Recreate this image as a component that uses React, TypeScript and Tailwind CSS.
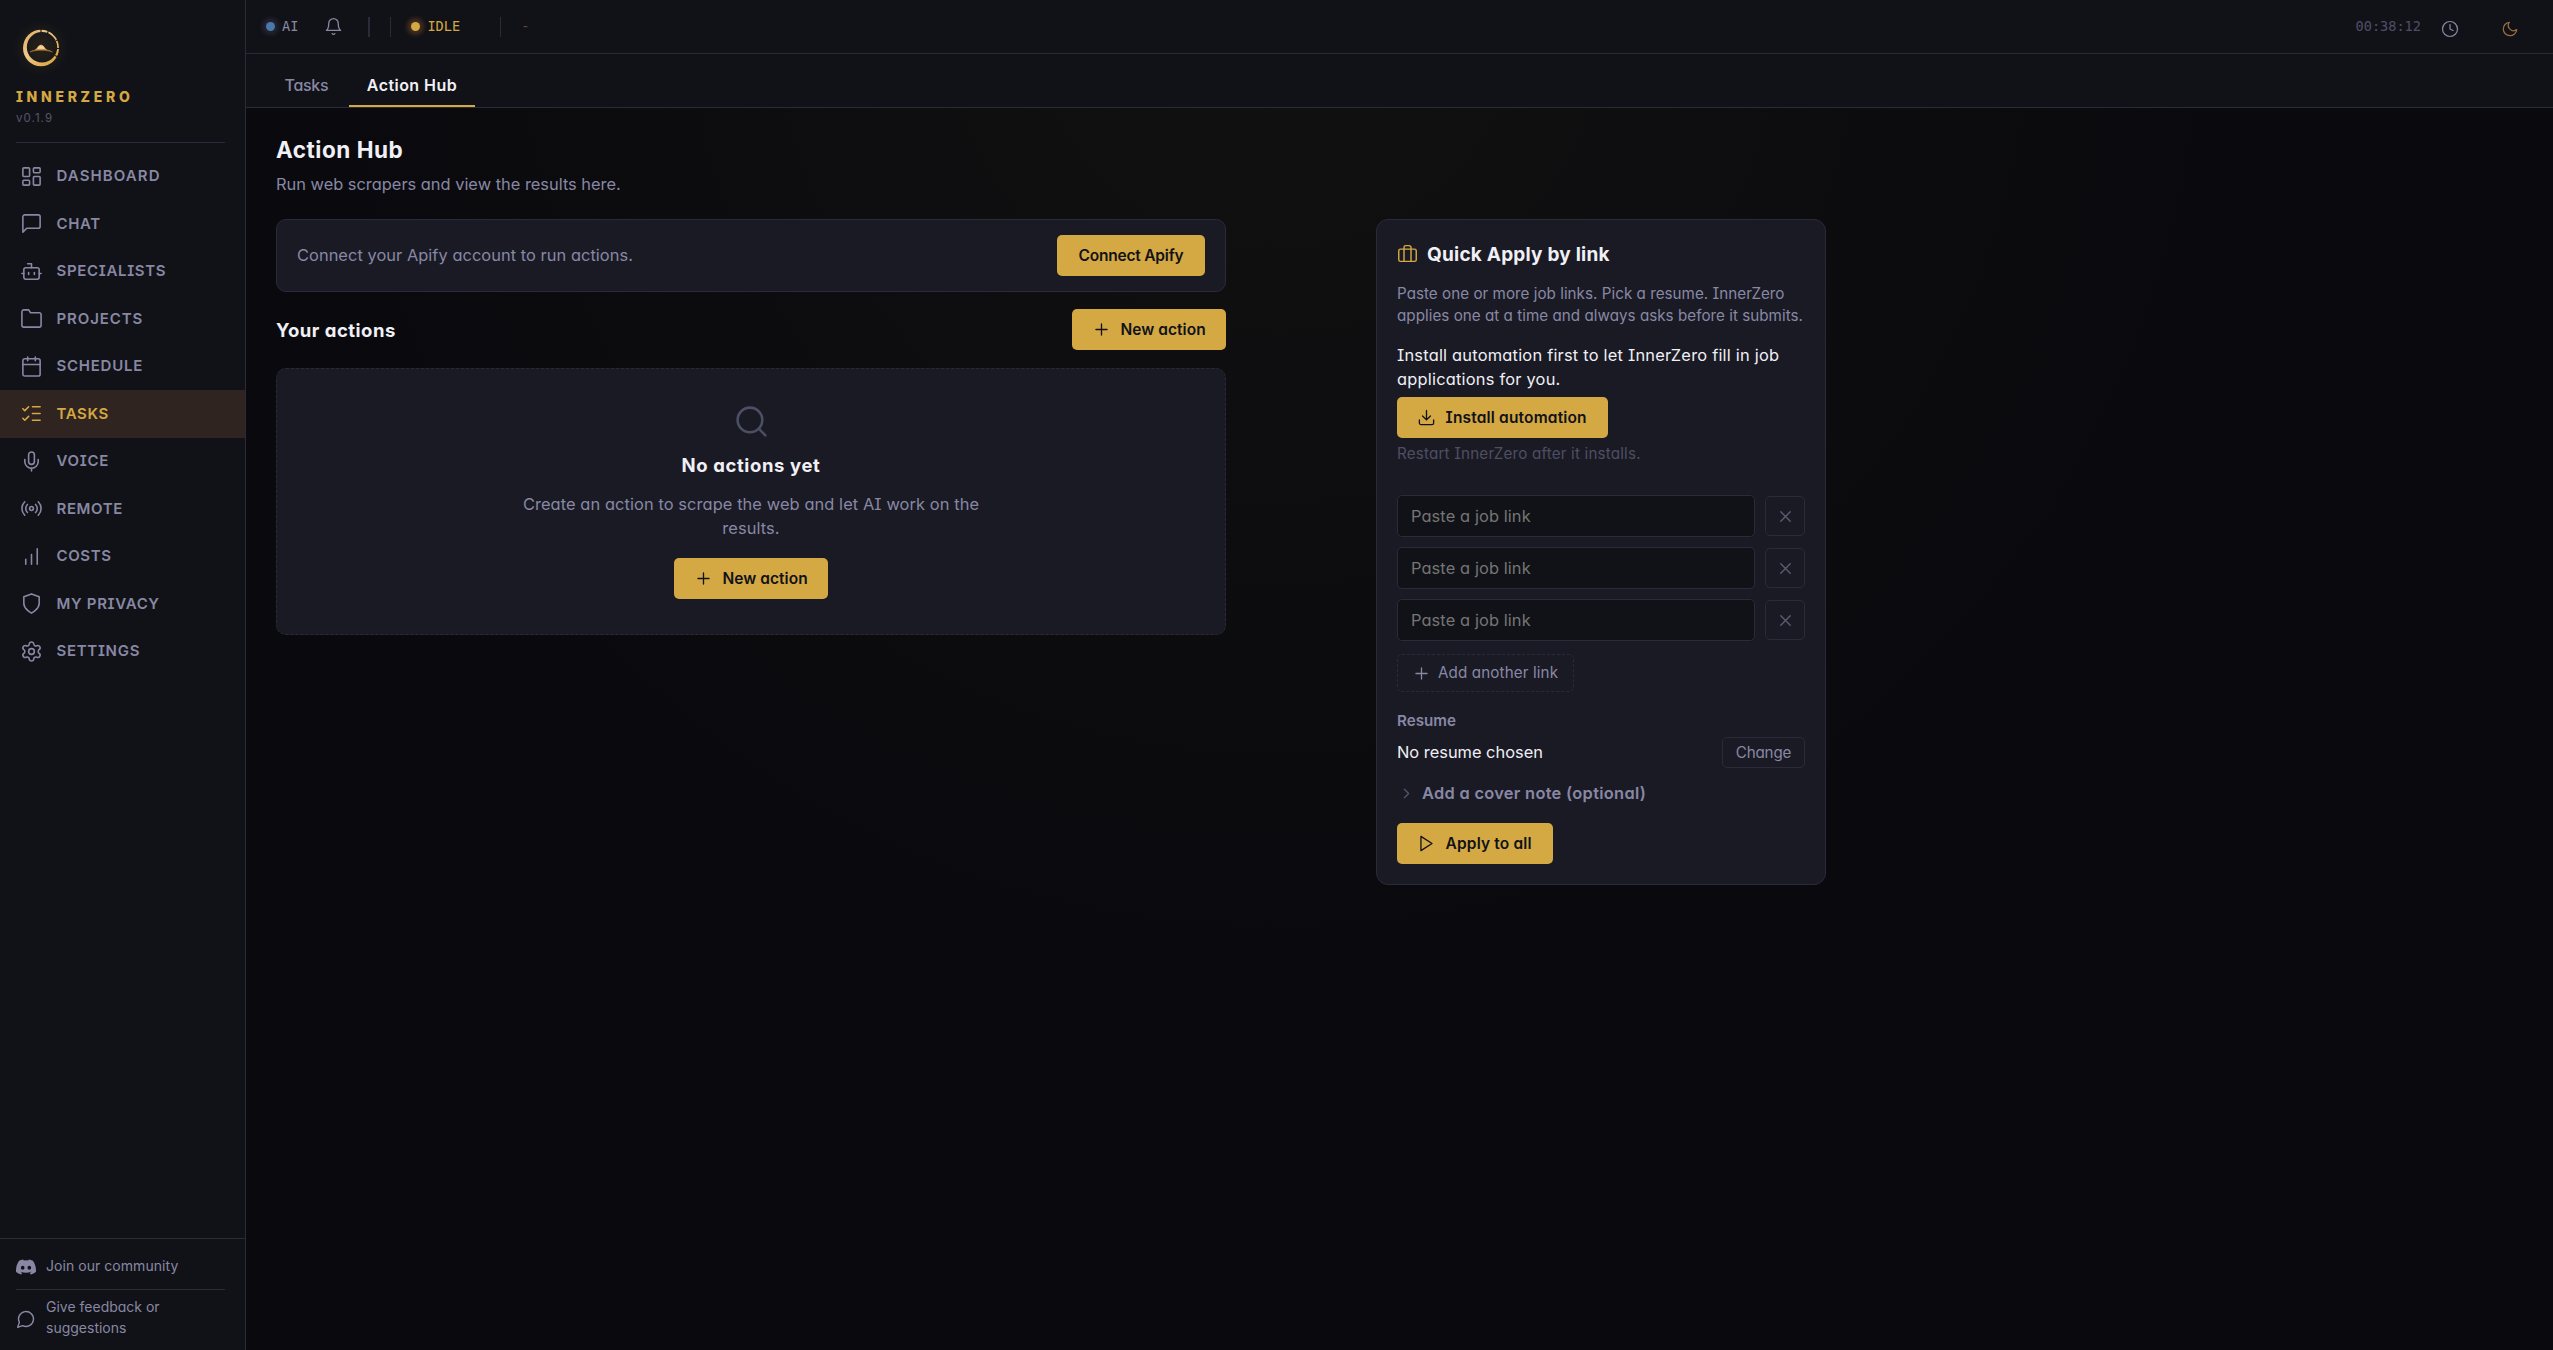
import type { ReactNode } from "react";
import { Bot, Radio, ListChecks, Mic, Settings } from "lucide-react";

type IconProps = { size?: number; sw?: number; className?: string };

function Svg({ size = 24, sw = 1.65, className = "", children }: IconProps & { children: ReactNode }) {
  return (
    <svg
      width={size}
      height={size}
      viewBox="0 0 24 24"
      fill="none"
      stroke="currentColor"
      strokeWidth={sw}
      strokeLinecap="round"
      strokeLinejoin="round"
      className={`shrink-0 ${className}`}
    >
      {children}
    </svg>
  );
}

const Dashboard = (p: IconProps) => (
  <Svg {...p}>
    <rect x="3" y="3" width="7" height="9" rx="1" />
    <rect x="14" y="3" width="7" height="5" rx="1" />
    <rect x="14" y="12" width="7" height="9" rx="1" />
    <rect x="3" y="16" width="7" height="5" rx="1" />
  </Svg>
);
const Chat = (p: IconProps) => (
  <Svg {...p}>
    <path d="M21 15a2 2 0 0 1-2 2H7l-4 4V5a2 2 0 0 1 2-2h14a2 2 0 0 1 2 2z" />
  </Svg>
);
const Folder = (p: IconProps) => (
  <Svg {...p}>
    <path d="M22 19a2 2 0 0 1-2 2H4a2 2 0 0 1-2-2V5a2 2 0 0 1 2-2h5l2 3h9a2 2 0 0 1 2 2z" />
  </Svg>
);
const Calendar = (p: IconProps) => (
  <Svg {...p}>
    <rect x="3" y="4" width="18" height="18" rx="2" />
    <path d="M16 2v4M8 2v4M3 10h18" />
  </Svg>
);
const Bars = (p: IconProps) => (
  <Svg {...p}>
    <path d="M12 20V10M18 20V4M6 20v-5" />
  </Svg>
);
const Shield = (p: IconProps) => (
  <Svg {...p}>
    <path d="M12 22s8-4 8-10V5l-8-3-8 3v7c0 6 8 10 8 10z" />
  </Svg>
);
const Bell = (p: IconProps) => (
  <Svg {...p}>
    <path d="M18 8A6 6 0 0 0 6 8c0 7-3 9-3 9h18s-3-2-3-9" />
    <path d="M13.7 21a2 2 0 0 1-3.4 0" />
  </Svg>
);
const Clock = (p: IconProps) => (
  <Svg {...p}>
    <circle cx="12" cy="12" r="10" />
    <path d="M12 6v6l4 2" />
  </Svg>
);
const Moon = (p: IconProps) => (
  <Svg {...p}>
    <path d="M21 12.8A9 9 0 1 1 11.2 3 7 7 0 0 0 21 12.8z" />
  </Svg>
);
const Search = (p: IconProps) => (
  <Svg {...p}>
    <circle cx="11" cy="11" r="8" />
    <path d="m21 21-4.35-4.35" />
  </Svg>
);
const Plus = (p: IconProps) => (
  <Svg {...p}>
    <path d="M12 5v14M5 12h14" />
  </Svg>
);
const Cross = (p: IconProps) => (
  <Svg {...p}>
    <path d="M18 6 6 18M6 6l12 12" />
  </Svg>
);
const Chevron = (p: IconProps) => (
  <Svg {...p}>
    <path d="m9 18 6-6-6-6" />
  </Svg>
);
const Download = (p: IconProps) => (
  <Svg {...p}>
    <path d="M21 15v4a2 2 0 0 1-2 2H5a2 2 0 0 1-2-2v-4M7 10l5 5 5-5M12 15V3" />
  </Svg>
);
const Play = (p: IconProps) => (
  <Svg {...p}>
    <path d="M5 3l14 9-14 9z" />
  </Svg>
);
const Briefcase = (p: IconProps) => (
  <Svg {...p}>
    <rect x="2" y="7" width="20" height="14" rx="2" />
    <path d="M16 21V5a2 2 0 0 0-2-2h-4a2 2 0 0 0-2 2v16" />
  </Svg>
);
const Bubble = (p: IconProps) => (
  <Svg {...p}>
    <path d="M7.9 20A9 9 0 1 0 4 16.1L2 22Z" />
  </Svg>
);
const Discord = () => (
  <svg width="20" height="20" viewBox="0 0 24 24" fill="currentColor" className="shrink-0">
    <path d="M20.317 4.37a19.79 19.79 0 0 0-4.885-1.515.074.074 0 0 0-.079.037c-.21.375-.444.864-.608 1.25a18.27 18.27 0 0 0-5.487 0 12.64 12.64 0 0 0-.617-1.25.077.077 0 0 0-.079-.037A19.736 19.736 0 0 0 3.677 4.37a.07.07 0 0 0-.032.027C.533 9.046-.32 13.58.099 18.057a.082.082 0 0 0 .031.057 19.9 19.9 0 0 0 5.993 3.03.078.078 0 0 0 .084-.028c.462-.63.874-1.295 1.226-1.994a.076.076 0 0 0-.041-.106 13.107 13.107 0 0 1-1.872-.892.077.077 0 0 1-.008-.128c.126-.094.252-.192.372-.292a.074.074 0 0 1 .077-.01c3.928 1.793 8.18 1.793 12.062 0a.074.074 0 0 1 .078.01c.12.098.246.198.373.292a.077.077 0 0 1-.006.127 12.3 12.3 0 0 1-1.873.892.077.077 0 0 0-.041.107c.36.698.772 1.362 1.225 1.993a.076.076 0 0 0 .084.028 19.84 19.84 0 0 0 6.002-3.03.077.077 0 0 0 .032-.054c.5-5.177-.838-9.674-3.549-13.66a.061.061 0 0 0-.031-.03zM8.02 15.33c-1.183 0-2.157-1.085-2.157-2.419 0-1.333.956-2.419 2.157-2.419 1.21 0 2.176 1.096 2.157 2.42 0 1.333-.956 2.418-2.157 2.418zm7.975 0c-1.183 0-2.157-1.085-2.157-2.419 0-1.333.955-2.419 2.157-2.419 1.21 0 2.176 1.096 2.157 2.42 0 1.333-.946 2.418-2.157 2.418z" />
  </svg>
);

function Logo() {
  return (
    <svg width="60" height="60" viewBox="0 0 60 60" className="shrink-0">
      <defs>
        <radialGradient id="halo">
          <stop offset="0" stopColor="#d4a843" stopOpacity="0.1" />
          <stop offset="0.6" stopColor="#d4a843" stopOpacity="0.05" />
          <stop offset="1" stopColor="#d4a843" stopOpacity="0" />
        </radialGradient>
        <linearGradient id="ring" x1="0" y1="0" x2="1" y2="1">
          <stop offset="0" stopColor="#dfa95e" />
          <stop offset="0.4" stopColor="#efc88c" />
          <stop offset="1" stopColor="#d4a02f" />
        </linearGradient>
      </defs>
      <circle cx="30" cy="30" r="28" fill="url(#halo)" />
      <path
        fillRule="evenodd"
        fill="url(#ring)"
        d="M12 30a18 18.3 0 1 0 36 0a18 18.3 0 1 0-36 0zM15.8 29.2a15.2 15.2 0 1 1 30.4 0a15.2 15.2 0 1 1-30.4 0z"
      />
      <g stroke="#17161a" strokeWidth="1.1">
        <path d="M30 10v5M37.5 12l-1 3.500M42.500 17l3-2.500M45 22.500l3.500-1M45.500 30.500h3.500M44 37.500l4 2" />
      </g>
      <path d="M19 34c5-3.600 17-3.600 22.500 0c-6-2.200-17-2.200-22.500 0z" fill="#b5763a" stroke="#b5763a" strokeWidth=".5" />
      <path d="M24.500 31.600c2-.6 2.500-4.600 5.500-4.600s3.500 4 5.500 4.600c-3-.6-8-.6-11 0z" fill="#f5d29a" stroke="#e6b25c" strokeWidth=".6" />
    </svg>
  );
}

const NAV: { label: string; icon: ReactNode; track: string; active?: boolean }[] = [
  { label: "DASHBOARD", icon: <Dashboard size={23} />, track: "tracking-[1.1px]" },
  { label: "CHAT", icon: <Chat size={23} />, track: "tracking-[0.6px]" },
  { label: "SPECIALISTS", icon: <Bot size={23} strokeWidth={1.65} />, track: "tracking-[0.68px]" },
  { label: "PROJECTS", icon: <Folder size={23} />, track: "tracking-[0.9px]" },
  { label: "SCHEDULE", icon: <Calendar size={23} />, track: "tracking-[0.75px]" },
  { label: "TASKS", icon: <ListChecks size={23} strokeWidth={1.65} />, track: "tracking-[0.6px]", active: true },
  { label: "VOICE", icon: <Mic size={23} strokeWidth={1.65} />, track: "tracking-[0.7px]" },
  { label: "REMOTE", icon: <Radio size={23} strokeWidth={1.65} />, track: "tracking-[0.6px]" },
  { label: "COSTS", icon: <Bars size={23} />, track: "tracking-[0.6px]" },
  { label: "MY PRIVACY", icon: <Shield size={23} />, track: "tracking-[0.66px]" },
  { label: "SETTINGS", icon: <Settings size={23} strokeWidth={1.65} />, track: "tracking-[0.7px]" },
];

function Sidebar() {
  return (
    <aside className="flex h-full w-[246px] shrink-0 flex-col border-r border-[#2a2a3a] bg-[#111217] text-[#8888a4]">
      <div className="mr-5 ml-4 flex h-[143px] shrink-0 flex-col border-b border-[#2a2a3a]">
        <div className="-ml-[5px] pt-[18px]">
          <Logo />
        </div>
        <div className="mt-[9px] text-sm leading-5 font-extrabold tracking-[3.7px] text-[#d4a843]">INNERZERO</div>
        <div className="mt-[3px] text-[11.5px] leading-4 tracking-[1.05px] text-[#55556a]">v0.1.9</div>
      </div>
      <nav className="mt-[9.500px] flex flex-1 flex-col">
        {NAV.map((n) => (
          <a
            key={n.label}
            className={`flex h-[47.500px] items-center gap-[14px] pl-[19.500px] text-[15px] font-[560] ${n.track} ${
              n.active ? "bg-[#2f241f] text-[#d4a843]" : ""
            }`}
          >
            {n.icon}
            <span>{n.label}</span>
          </a>
        ))}
      </nav>
      <div className="flex h-28 shrink-0 flex-col border-t border-[#2a2a3a] pr-5 pl-4 text-sm leading-[21px]">
        <a className="flex h-[51px] items-center gap-[10px] border-b border-[#2a2a3a] pt-[5px] tracking-[0.050px]">
          <Discord />
          <span className="pb-[3px]">Join our community</span>
        </a>
        <a className="flex items-center gap-[10px] pt-[6px]">
          <Bubble size={20} className="mt-[3px]" />
          <span>
            Give feedback or
            <br />
            suggestions
          </span>
        </a>
      </div>
    </aside>
  );
}

function Header() {
  return (
    <header className="flex h-[54px] shrink-0 items-center border-b border-[#2a2a3a] bg-[#111217] font-['DejaVu_Sans_Mono',monospace] text-[13.600px]">
      <span className="ml-5 size-[9px] rounded-full bg-[#4a78a8] shadow-[0_0_4px_4px_rgba(90,90,140,0.25)]" />
      <span className="ml-[7px] text-[#8888a4]">AI</span>
      <Bell size={19} className="ml-[26px] text-[#8888a4]" />
      <span className="ml-[25px] h-5 w-0.5 bg-[#2a2a3a]" />
      <span className="ml-5 h-5 w-px bg-[#2a2a3a]" />
      <span className="ml-5 size-[9px] rounded-full bg-[#d4a843] shadow-[0_0_4px_4px_rgba(190,110,50,0.3)]" />
      <span className="ml-[7px] text-[#d4a843]">IDLE</span>
      <span className="ml-10 h-5 w-px bg-[#2a2a3a]" />
      <span className="ml-[20px] text-[#6b4a30]">-</span>
      <span className="ml-auto text-[#4e4e68]">00:38:12</span>
      <Clock size={18} className="mt-1 ml-[20px] text-[#8888a4]" />
      <Moon size={18} className="mt-1 mr-[34px] ml-[42px] text-[#9c6b40]" />
    </header>
  );
}

function Tabs() {
  return (
    <div className="flex h-[54px] shrink-0 items-end border-b border-[#2a2a3a] bg-[#111217] pl-[19px] text-base">
      <div className="flex h-[44px] w-[84px] items-center pl-[19.500px] font-medium tracking-[-0.300px] text-[#8888a4]">Tasks</div>
      <div className="flex h-[44px] w-[126px] items-center justify-center border-b-2 border-[#d4a843] pt-0.5 font-semibold tracking-[0.450px] text-[#f0f0f6]">
        Action Hub
      </div>
    </div>
  );
}

function GoldButton({ icon, children, className }: { icon?: ReactNode; children: ReactNode; className: string }) {
  return (
    <button
      className={`flex h-[41px] shrink-0 items-center gap-[9.500px] rounded-[5px] bg-[#d4a843] pl-5 text-[15.500px] font-semibold whitespace-nowrap text-[#111217] ${className}`}
    >
      {icon}
      {children}
    </button>
  );
}

function LeftColumn() {
  return (
    <div className="flex w-[950px] flex-col">
      <div className="flex h-[73px] items-center justify-between rounded-[10px] border border-[#2a2a3a] bg-[#1a1a24] px-5">
        <span className="text-[16.400px] tracking-[0.050px] text-[#8888a4]">Connect your Apify account to run actions.</span>
        <GoldButton className="w-[148px] pl-[21.500px] tracking-[-0.200px]">Connect Apify</GoldButton>
      </div>
      <div className="mt-[17px] flex items-center justify-between">
        <h2 className="pt-0.5 text-[18.500px] font-bold tracking-[0.500px] text-[#f0f0f6]">Your actions</h2>
        <GoldButton icon={<Plus size={19} />} className="w-[154px] tracking-[0.040px]">
          New action
        </GoldButton>
      </div>
      <div className="mt-[18px] flex h-[267px] flex-col items-center rounded-[10px] border border-dashed border-[#2a2a3a] bg-[#1a1a24] pt-[34px]">
        <Search size={37} className="text-[#4b4f62]" />
        <h3 className="mt-3 text-[18.500px] leading-[26px] font-bold tracking-[0.600px] text-[#f0f0f6]">No actions yet</h3>
        <p className="mt-[14px] w-[470px] text-center text-[16.400px] leading-6 tracking-[0.090px] text-[#8888a4]">
          Create an action to scrape the web and let AI work on the results.
        </p>
        <GoldButton icon={<Plus size={19} />} className="mt-[18px] w-[154px] tracking-[0.040px]">
          New action
        </GoldButton>
      </div>
    </div>
  );
}

function QuickApply() {
  return (
    <div className="flex h-[666px] w-[450px] flex-col items-start rounded-xl border border-[#2a2a3a] bg-[#1a1a24] p-5 text-[#8888a4]">
      <div className="flex h-[29px] items-center gap-[9.500px]">
        <Briefcase size={21} className="-mt-[3px] -ml-[0.500px] text-[#d4a843]" />
        <h2 className="pt-px text-[19px] font-bold tracking-[0.220px] text-[#f0f0f6]">Quick Apply by link</h2>
      </div>
      <p className="mt-[14px] text-[15.200px] leading-[22px] tracking-[0.030px] whitespace-nowrap">
        Paste one or more job links. Pick a resume. InnerZero
        <br />
        applies one at a time and always asks before it submits.
      </p>
      <p className="mt-[16px] text-[16.400px] leading-6 tracking-[0.220px] whitespace-nowrap text-[#f0f0f6]">
        Install automation first to let InnerZero fill in job
        <br />
        applications for you.
      </p>
      <GoldButton icon={<Download size={19} />} className="mt-[6px] w-[211px] tracking-[0.170px]">
        Install automation
      </GoldButton>
      <p className="mt-[6px] text-[15.200px] leading-5 tracking-[0.180px] text-[#4e4e62]">Restart InnerZero after it installs.</p>
      <div className="mt-[31px] flex w-full flex-col gap-[10px]">
        {[0, 1, 2].map((i) => (
          <div key={i} className="flex items-center justify-between">
            <div className="flex h-[42px] w-[358px] items-center rounded-[5px] border border-[#2a2a3a] bg-[#111217] px-[13px] text-[16.400px] tracking-[0.100px] text-[#757575]">
              Paste a job link
            </div>
            <button className="flex size-10 items-center justify-center rounded-[5px] border border-[#2a2a3a] text-[#5c5f74]">
              <Cross size={19} />
            </button>
          </div>
        ))}
      </div>
      <button className="mt-[13px] flex h-[38px] w-[177px] items-center gap-[7px] rounded-[5px] border border-dashed border-[#2a2a3a] pl-[14px] text-[15.200px] tracking-[0.120px] whitespace-nowrap">
        <Plus size={19} />
        Add another link
      </button>
      <div className="mt-[19px] text-[15.200px] leading-5 font-semibold">Resume</div>
      <div className="mt-[6px] flex h-[31px] w-full items-center justify-between">
        <span className="text-[16.400px] text-[#f0f0f6]">No resume chosen</span>
        <button className="flex h-[31px] w-[83px] items-center justify-center rounded-[5px] border border-[#2a2a3a] pt-px text-[15.200px] tracking-[-0.200px]">
          Change
        </button>
      </div>
      <div className="mt-[13px] flex items-center gap-[7px] pl-px text-[16.400px] leading-6 font-semibold tracking-[0.300px]">
        <Chevron size={17} className="text-[#55586c]" />
        Add a cover note (optional)
      </div>
      <GoldButton icon={<Play size={19} />} className="mt-[18px] w-[156px] tracking-[0.170px]">
        Apply to all
      </GoldButton>
    </div>
  );
}

export default function App() {
  return (
    <div className="flex h-[1350px] w-[2553px] overflow-hidden bg-[#0a0a0e] bg-[radial-gradient(circle_950px_at_1276px_0px,#111111_0%,#0a0a0e_100%)] font-[Inter,sans-serif] font-[430] [font-feature-settings:'cv11','cv08']">
      <Sidebar />
      <div className="flex min-w-0 flex-1 flex-col">
        <Header />
        <Tabs />
        <main className="flex flex-1 flex-col pt-7 pl-[30px]">
          <h1 className="text-[22.500px] leading-7 font-bold tracking-[0.520px] text-[#f0f0f6]">Action Hub</h1>
          <p className="mt-2 text-[16.400px] leading-6 text-[#8888a4]">Run web scrapers and view the results here.</p>
          <div className="mt-[23px] flex items-start gap-[150px]">
            <LeftColumn />
            <QuickApply />
          </div>
        </main>
      </div>
    </div>
  );
}
